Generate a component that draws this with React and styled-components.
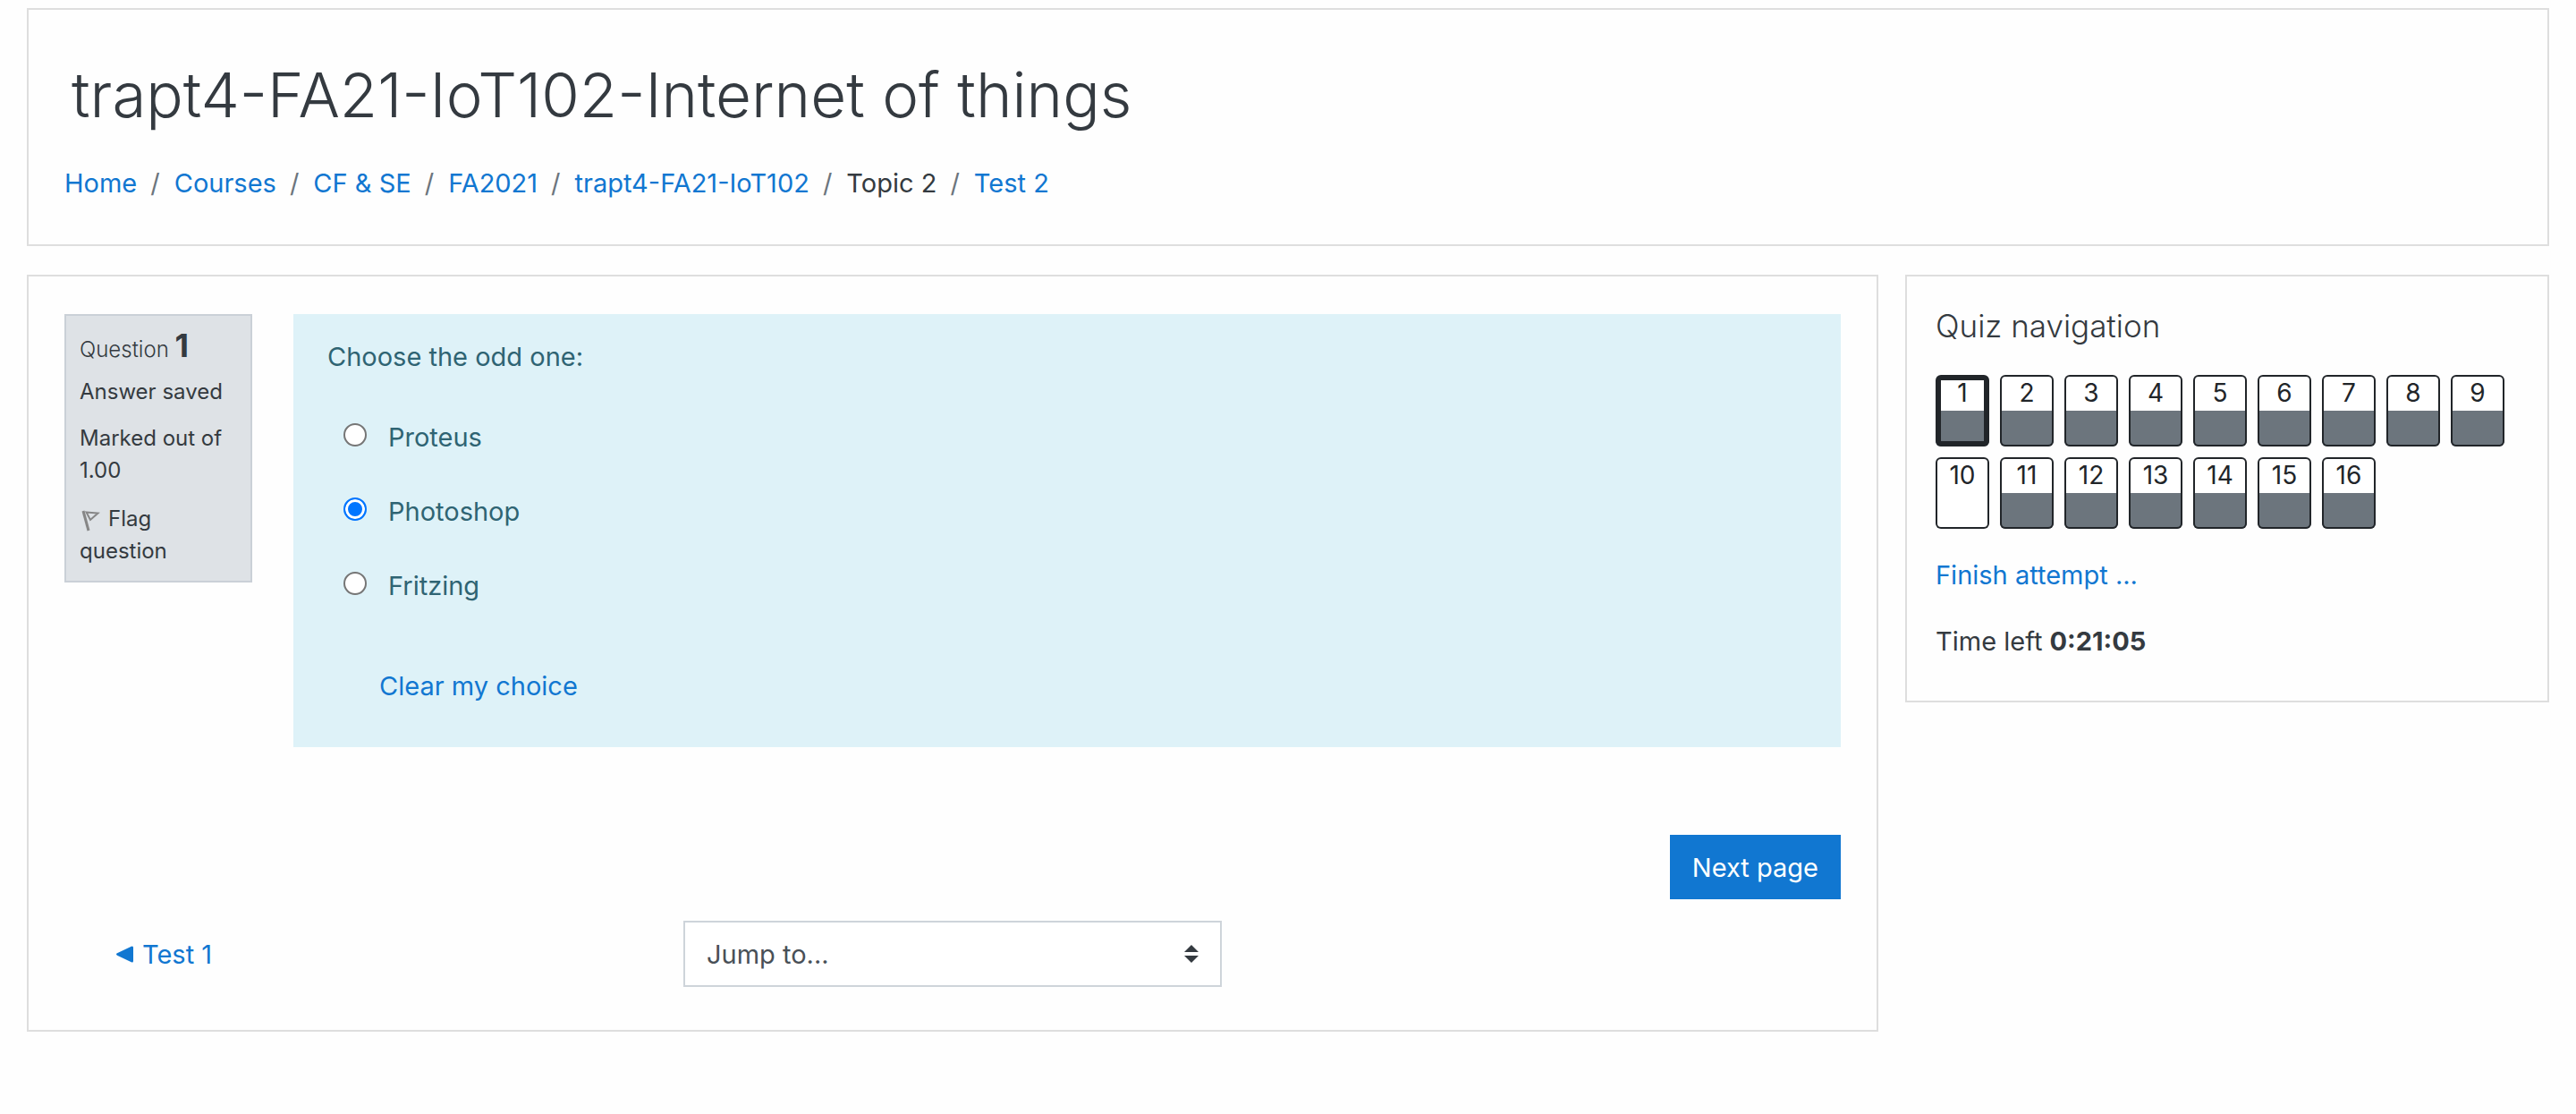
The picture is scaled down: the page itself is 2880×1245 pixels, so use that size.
import React, { useState } from "react";
import styled, { createGlobalStyle } from "styled-components";

const GlobalStyle = createGlobalStyle`
  *, *::before, *::after { box-sizing: border-box; }
  body {
    margin: 0;
    background: #fefefe;
    color: #343a40;
    font-family: Inter, "Liberation Sans", sans-serif;
    font-size: 29px;
    line-height: 45px;
  }
`;

const Page = styled.div`
  display: flex;
  flex-direction: column;
  gap: 32px;
  padding: 9px 30px 92px;
`;

const Card = styled.div`
  background: #fefefe;
  border: 2px solid #dedede;
`;

const HeaderCard = styled(Card).attrs({ as: "header" })`
  padding: 50px 40px 46px;
`;

const PageTitle = styled.h1`
  margin: 0 0 31px;
  padding: 0 8px;
  font-size: 69px;
  font-weight: 300;
  line-height: 90px;
`;

const Link = styled.a`
  color: #1177d1;
  text-decoration: none;
  &:hover { text-decoration: underline; }
`;

const Crumbs = styled.ol`
  display: flex;
  flex-wrap: wrap;
  margin: 0;
  padding: 0;
  list-style: none;
`;

const Crumb = styled.li`
  & + &::before {
    content: "/";
    padding: 0 16px 0 15px;
    color: #6c757d;
  }
`;

const Columns = styled.div`
  display: grid;
  grid-template-columns: minmax(0, 1fr) 720px;
  align-items: start;
  gap: 30px;
`;

const QuizCard = styled(Card).attrs({ as: "main" })`
  padding: 42px 40px 48px;
`;

const Question = styled.section`
  display: flex;
  align-items: flex-start;
  gap: 46px;
`;

const Info = styled.div`
  display: flex;
  flex-direction: column;
  flex: none;
  gap: 16px;
  width: 210px;
  padding: 15px;
  background: #dee2e6;
  border: 2px solid #cad0d7;
  font-size: 24px;
  line-height: 36px;
`;

const InfoTitle = styled.h3`
  margin: 0;
  font-size: 24px;
  font-weight: 300;
  line-height: 24px;
`;

const QuestionNumber = styled.span`
  font-size: 36px;
  font-weight: 700;
  line-height: 36px;
`;

const FlagButton = styled.button`
  margin: 0;
  padding: 2px 0 0;
  border: 0;
  background: none;
  color: inherit;
  font: inherit;
  text-align: left;
  cursor: pointer;
  svg {
    width: 24px;
    height: 24px;
    margin-right: 8px;
    vertical-align: -6px;
  }
`;

const Formulation = styled.div`
  flex: 1;
  min-width: 0;
  padding: 25px 38px 46px;
  background: #def2f8;
  color: #2f6473;
`;

const Choices = styled.fieldset`
  display: flex;
  flex-direction: column;
  gap: 38px;
  margin: 0;
  padding: 0 18px;
  border: 0;
`;

const Prompt = styled.legend`
  margin: 0 -18px 45px;
  padding: 0;
`;

const Choice = styled.label`
  display: flex;
  align-items: flex-start;
  gap: 24px;
`;

const Radio = styled.input.attrs({ type: "radio" })`
  appearance: none;
  flex: none;
  width: 26px;
  height: 26px;
  margin: 7px 0 0;
  border: 2px solid #767676;
  border-radius: 50%;
  background: #fff;
  &:checked {
    border-color: #0075ff;
    background: #0075ff;
    box-shadow: inset 0 0 0 3px #fff;
  }
`;

const ClearButton = styled.button`
  display: block;
  margin: 67px 0 0 58px;
  padding: 0;
  border: 0;
  background: none;
  color: #1177d1;
  font: inherit;
  cursor: pointer;
`;

const Submit = styled.div`
  display: flex;
  justify-content: flex-end;
  margin: 98px 0 24px;
`;

const PrimaryButton = styled.button`
  height: 72px;
  padding: 0 25px;
  border: 0;
  background: #1177d1;
  color: #fff;
  font: inherit;
  cursor: pointer;
`;

const ActivityNav = styled.nav`
  display: grid;
  grid-template-columns: repeat(3, minmax(0, 1fr));
  align-items: center;
`;

const NavCell = styled.div`
  padding: 0 30px;
`;

const PrevLink = styled(Link)`
  display: inline-flex;
  align-items: center;
  gap: 10px;
  padding: 0 28px;
  svg { width: 19px; height: 19px; }
`;

const SelectBox = styled.div`
  position: relative;
  svg {
    position: absolute;
    top: 27px;
    right: 26px;
    width: 16px;
    height: 20px;
    pointer-events: none;
  }
`;

const Select = styled.select`
  display: block;
  appearance: none;
  width: 100%;
  height: 74px;
  padding: 0 24px;
  border: 2px solid #ced4da;
  border-radius: 0;
  background: #fff;
  color: #495057;
  font: inherit;
`;

const SideCard = styled(Card).attrs({ as: "aside" })`
  display: flex;
  flex-direction: column;
  align-items: flex-start;
  gap: 29px;
  padding: 32px 32px 44px;
`;

const SideTitle = styled.h2`
  margin: 0 0 3px;
  font-size: 35px;
  font-weight: 300;
  line-height: 46px;
`;

const QuestionGrid = styled.div`
  display: flex;
  flex-wrap: wrap;
  gap: 12px;
`;

const QuestionLink = styled.a`
  width: 60px;
  height: 80px;
  border-radius: 6px;
  background: ${({ $answered }) =>
    $answered ? "linear-gradient(#fff 50%, #6c757d 50%)" : "#fff"};
  box-shadow: inset 0 0 0 ${({ $current }) => ($current ? 6 : 2)}px #212529;
  color: #212529;
  font-size: 28px;
  line-height: 40px;
  text-align: center;
  text-decoration: none;
`;

const crumbs = [
  { text: "Home", link: true },
  { text: "Courses", link: true },
  { text: "CF & SE", link: true },
  { text: "FA2021", link: true },
  { text: "trapt4-FA21-IoT102", link: true },
  { text: "Topic 2", link: false },
  { text: "Test 2", link: true },
];

const options = ["Proteus", "Photoshop", "Fritzing"];
const questions = Array.from({ length: 16 }, (_, i) => i + 1);

export default function App() {
  const [choice, setChoice] = useState("Photoshop");
  return (
    <>
      <GlobalStyle />
      <Page>
        <HeaderCard>
          <PageTitle>trapt4-FA21-IoT102-Internet of things</PageTitle>
          <nav aria-label="Breadcrumb">
            <Crumbs>
              {crumbs.map(({ text, link }) => (
                <Crumb key={text}>{link ? <Link href="#">{text}</Link> : text}</Crumb>
              ))}
            </Crumbs>
          </nav>
        </HeaderCard>
        <Columns>
          <QuizCard>
            <Question>
              <Info>
                <InfoTitle>
                  Question <QuestionNumber>1</QuestionNumber>
                </InfoTitle>
                <div>Answer saved</div>
                <div>Marked out of 1.00</div>
                <FlagButton type="button">
                  <svg viewBox="0 0 24 24" fill="none" stroke="#868686" aria-hidden="true">
                    <path d="M4 1l6 22" strokeWidth="3" />
                    <path d="M7.500 2.500l13 1-8.500 7.500z" strokeWidth="2" />
                  </svg>
                  Flag question
                </FlagButton>
              </Info>
              <Formulation>
                <Choices>
                  <Prompt>Choose the odd one:</Prompt>
                  {options.map((option) => (
                    <Choice key={option}>
                      <Radio
                        name="answer"
                        value={option}
                        checked={choice === option}
                        onChange={() => setChoice(option)}
                      />
                      {option}
                    </Choice>
                  ))}
                </Choices>
                <ClearButton type="button" onClick={() => setChoice(null)}>
                  Clear my choice
                </ClearButton>
              </Formulation>
            </Question>
            <Submit>
              <PrimaryButton type="button">Next page</PrimaryButton>
            </Submit>
            <ActivityNav aria-label="Activities">
              <NavCell>
                <PrevLink href="#">
                  <svg viewBox="0 0 19 19" fill="currentColor" aria-hidden="true">
                    <path d="M1 8.300L16.800.700q2.200-.900 2.200 1.300v15q0 2.200-2.200 1.300L1 10.700q-2-1.200 0-2.400z" />
                  </svg>
                  Test 1
                </PrevLink>
              </NavCell>
              <NavCell>
                <SelectBox>
                  <Select aria-label="Jump to..." defaultValue="">
                    <option value="">Jump to...</option>
                  </Select>
                  <svg viewBox="0 0 16 20" fill="#343a40" aria-hidden="true">
                    <path d="M8 0l8 8H0zM8 20l8-8H0z" />
                  </svg>
                </SelectBox>
              </NavCell>
            </ActivityNav>
          </QuizCard>
          <SideCard>
            <SideTitle>Quiz navigation</SideTitle>
            <QuestionGrid>
              {questions.map((n) => (
                <QuestionLink key={n} href="#" $answered={n !== 10} $current={n === 1}>
                  {n}
                </QuestionLink>
              ))}
            </QuestionGrid>
            <Link href="#">Finish attempt ...</Link>
            <div>
              Time left <strong>0:21:05</strong>
            </div>
          </SideCard>
        </Columns>
      </Page>
    </>
  );
}
